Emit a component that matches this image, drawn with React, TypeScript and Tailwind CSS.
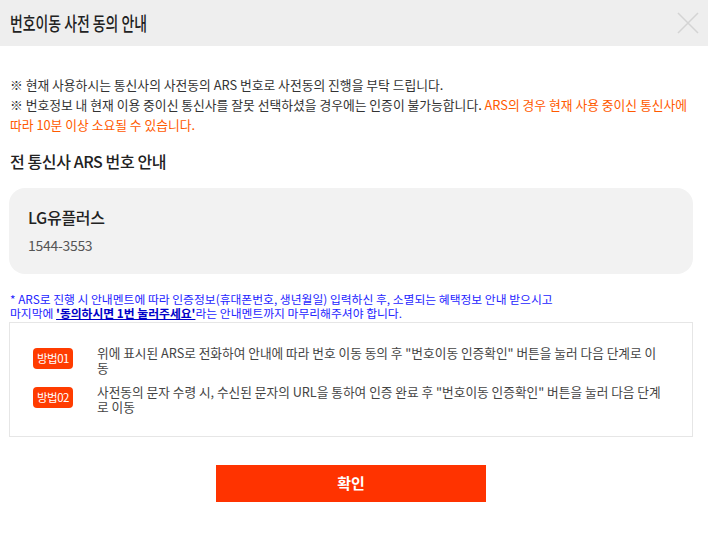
const steps = [
  {
    label: "방법01",
    lines: ['위에 표시된 ARS로 전화하여 안내에 따라 번호 이동 동의 후 "번호이동 인증확인" 버튼을 눌러 다음 단계로 이', "동"],
  },
  {
    label: "방법02",
    lines: ['사전동의 문자 수령 시, 수신된 문자의 URL을 통하여 인증 완료 후 "번호이동 인증확인" 버튼을 눌러 다음 단계', "로 이동"],
  },
];

export default function App() {
  return (
    <div className="w-[708px] h-[539px] bg-white font-['Noto_Sans_CJK_KR',sans-serif] text-[#333] overflow-hidden">
      <div className="h-[46px] bg-[#eeeeee] flex items-center justify-between pl-[10px] pr-[9px]">
        <h1 className="inline-block origin-left scale-x-[0.73] text-[19px] font-medium text-[#222] whitespace-nowrap">
          번호이동 사전 동의 안내
        </h1>
        <button>
          <svg width="22" height="22" viewBox="0 0 22 22" className="text-[#d4d4d4]">
            <path d="M1 1 L21 21 M21 1 L1 21" stroke="currentColor" strokeWidth="1.5" fill="none" />
          </svg>
        </button>
      </div>

      <div className="pl-[9px] pr-[15px]">
        <div className="pt-[29px] pl-[1px] text-[12.8px] leading-[20px] whitespace-nowrap -mr-[14px]">
          <p>※ 현재 사용하시는 통신사의 사전동의 ARS 번호로 사전동의 진행을 부탁 드립니다.</p>
          <p>
            ※ 번호정보 내 현재 이용 중이신 통신사를 잘못 선택하셨을 경우에는 인증이 불가능합니다.{" "}
            <span className="text-[#ff5a00]">ARS의 경우 현재 사용 중이신 통신사에</span>
          </p>
          <p className="text-[#ff5a00]">따라 10분 이상 소요될 수 있습니다.</p>
        </div>

        <h2 className="mt-[15px] pl-[1px] text-[16px] leading-[22px] font-medium text-[#222] tracking-[-0.4px]">
          전 통신사 ARS 번호 안내
        </h2>

        <div className="mt-[16px] h-[86px] rounded-[16px] bg-[#f2f2f2] px-[19px] pt-[19px]">
          <p className="text-[16px] leading-[20px] font-medium text-[#222] tracking-[-0.3px]">LG유플러스</p>
          <p className="mt-[8px] text-[14px] leading-[20px] text-[#555] tracking-[-0.3px]">1544-3553</p>
        </div>

        <div className="mt-[18px] pl-[1px] text-[11.8px] leading-[14px] text-[#2424ff] whitespace-nowrap">
          <p>* ARS로 진행 시 안내멘트에 따라 인증정보(휴대폰번호, 생년월일) 입력하신 후, 소멸되는 혜택정보 안내 받으시고</p>
          <p>
            마지막에 <span className="font-bold text-[#0000c8] underline">'동의하시면 1번 눌러주세요'</span>
            라는 안내멘트까지 마무리해주셔야 합니다.
          </p>
        </div>

        <div className="mt-[2px] h-[115px] border border-[#e6e6e6] pl-[23px] pr-[10px] pt-[22px] flex flex-col gap-[9px]">
          {steps.map((s) => (
            <div key={s.label} className="flex items-start gap-[24px]">
              <span className="mt-[3px] shrink-0 w-[40px] h-[21px] rounded-[4px] bg-[#ff3c00] text-white text-[11.5px] tracking-[-0.5px] flex items-center justify-center">
                {s.label}
              </span>
              <p className="flex-1 text-[12.7px] leading-[15px] text-[#444] whitespace-nowrap">
                {s.lines[0]}
                <br />
                {s.lines[1]}
              </p>
            </div>
          ))}
        </div>

        <div className="mt-[28px] flex justify-center">
          <button className="w-[270px] h-[37px] bg-[#ff3300] text-white text-[15px] font-bold">확인</button>
        </div>
      </div>
    </div>
  );
}
